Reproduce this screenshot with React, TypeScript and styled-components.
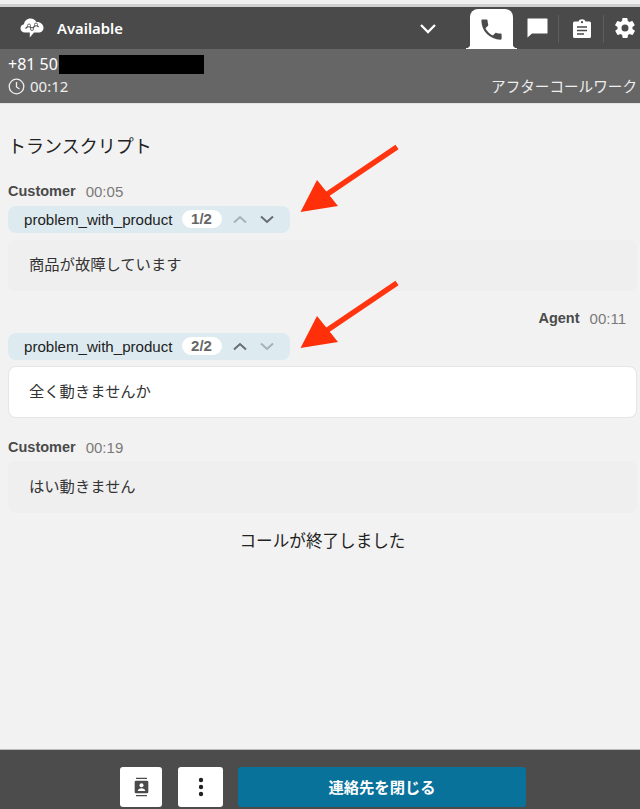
import React from "react";
import styled, { createGlobalStyle } from "styled-components";

const Global = createGlobalStyle`
  html, body { margin: 0; padding: 0; height: 100%; background: #f2f2f2; overflow: hidden; }
  #root { height: 100%; }
  * { box-sizing: border-box; }
`;

const Page = styled.div`
  position: relative;
  width: 640px;
  height: 809px;
  display: flex;
  flex-direction: column;
  background: #f2f2f2;
  font-family: "Liberation Sans", "Noto Sans CJK JP", sans-serif;
  overflow: hidden;
`;

const TopStrip = styled.div`
  height: 7px;
  flex: none;
  background: #f0f0f0;
  border-bottom: 3px solid #cfcfcf;
`;

const Header = styled.header`
  height: 42px;
  flex: none;
  display: flex;
  align-items: stretch;
  background: #4a4a4a;
  color: #fff;
`;

const Status = styled.div`
  display: flex;
  align-items: center;
  gap: 13px;
  padding-left: 20px;
  flex: 1;
  font-family: "Noto Sans", sans-serif;
  font-size: 14.8px;
  font-weight: 600;
`;

const Chevron = styled.div`
  width: 28px;
  margin-right: 28px;
  display: flex;
  align-items: center;
  justify-content: center;
`;

const Tabs = styled.nav`
  display: flex;
  align-items: stretch;
  width: 170px;
`;

const ActiveTab = styled.div`
  position: relative;
  width: 43px;
  margin: 2px 0 0 0;
  background: #fff;
  border-radius: 8px 8px 0 0;
  display: flex;
  align-items: center;
  justify-content: center;
  &::before, &::after {
    content: "";
    position: absolute;
    bottom: 0;
    width: 4px;
    height: 5px;
    background: radial-gradient(circle at var(--cx) 0, transparent 4px, #fff 4.5px);
  }
  &::before { left: -4px; --cx: 0; }
  &::after { right: -4px; --cx: 100%; }
`;

const Tab = styled.div<{ $w: number; $inset: number; $divider?: boolean }>`
  width: ${(p) => p.$w}px;
  padding-left: ${(p) => p.$inset}px;
  display: flex;
  align-items: center;
  justify-content: center;
  position: relative;
  ${(p) =>
    p.$divider
      ? `&::before { content: ""; position: absolute; left: 0; top: 8px; bottom: 6px; width: 1px; background: #5e5e5e; }`
      : ""}
`;

const CallBar = styled.section`
  height: 55px;
  flex: none;
  background: #666;
  color: #fff;
  display: flex;
  justify-content: space-between;
  align-items: flex-end;
  padding: 5px 3px 8px 8px;
  border-bottom: 1px solid #e3e3e3;
`;

const CallInfo = styled.div`
  display: flex;
  flex-direction: column;
  gap: 3px;
`;

const Phone = styled.div`
  display: flex;
  align-items: center;
  font-family: "Noto Sans", sans-serif;
  font-size: 16px;
  line-height: 19px;
  height: 19px;
  width: 196px;
`;

const Redaction = styled.span`
  display: block;
  width: 145px;
  height: 19px;
  margin-left: auto;
  background: #000;
`;

const Timer = styled.div`
  display: flex;
  align-items: center;
  gap: 5px;
  font-family: "Noto Sans", sans-serif;
  font-size: 15px;
  line-height: 18px;
  color: #eee;
`;

const WorkState = styled.div`
  font-family: "Noto Sans CJK JP", sans-serif;
  font-size: 14.6px;
  line-height: 18px;
  color: #eee;
`;

const Main = styled.main`
  flex: 1;
  padding: 28px 3px 0 8px;
  display: flex;
  flex-direction: column;
  color: #1e1e1e;
`;

const Title = styled.h1`
  margin: 0 0 24px 0;
  font-family: "Noto Sans CJK JP", sans-serif;
  font-size: 18px;
  font-weight: 400;
  line-height: 26px;
  color: #222;
`;

const Meta = styled.div<{ $right?: boolean }>`
  display: flex;
  gap: 10px;
  height: 18px;
  align-items: center;
  justify-content: ${(p) => (p.$right ? "flex-end" : "flex-start")};
  padding-right: ${(p) => (p.$right ? "11px" : "0")};
  font-size: 14.5px;
`;

const Speaker = styled.span`
  font-weight: 700;
  color: #4a4a4a;
`;

const Time = styled.span`
  color: #7a7a7a;
  font-size: 15px;
`;

const Intent = styled.div`
  margin-top: 6px;
  width: 282px;
  height: 27px;
  border-radius: 8px;
  background: #ddebf1;
  display: flex;
  align-items: center;
  padding-left: 16px;
  padding-bottom: 1px;
  font-size: 15.1px;
  color: #222;
`;

const Count = styled.span`
  margin-left: 9px;
  width: 40px;
  height: 18px;
  border-radius: 9px;
  background: #fff;
  color: #666;
  font-weight: 700;
  font-size: 15px;
  line-height: 18px;
  text-align: center;
`;

const Arrows = styled.div`
  margin-left: 11px;
  display: flex;
  gap: 13px;
`;

const Bubble = styled.div<{ $agent?: boolean; $gap: number; $h: number }>`
  margin-top: ${(p) => p.$gap}px;
  height: ${(p) => p.$h}px;
  border-radius: 8px;
  display: flex;
  align-items: center;
  padding: 0 0 5px 20px;
  font-family: "Noto Sans CJK JP", sans-serif;
  font-size: 15.3px;
  color: #333;
  background: ${(p) => (p.$agent ? "#fff" : "#efefef")};
  border: 1px solid ${(p) => (p.$agent ? "#e6e6e6" : "#efefef")};
`;

const Turn = styled.article<{ $top: number }>`
  margin-top: ${(p) => p.$top}px;
  display: flex;
  flex-direction: column;
`;

const Ended = styled.div`
  margin-top: 14px;
  text-align: center;
  font-family: "Noto Sans CJK JP", sans-serif;
  font-size: 16.6px;
  line-height: 26px;
  color: #222;
`;

const Footer = styled.footer`
  height: 60px;
  flex: none;
  background: #4c4c4c;
  border-top: 1px solid #bbb;
  display: flex;
  padding: 17px 0 0 120px;
`;

const IconButton = styled.button<{ $w: number; $mr: number }>`
  width: ${(p) => p.$w}px;
  height: 40px;
  margin-right: ${(p) => p.$mr}px;
  background: #fff;
  border: none;
  border-radius: 3px;
  padding: 0;
  display: flex;
  align-items: center;
  justify-content: center;
`;

const PrimaryButton = styled.button`
  width: 288px;
  height: 40px;
  background: #08729b;
  color: #fff;
  border: none;
  border-radius: 3px;
  padding: 0 0 3px;
  font-family: "Noto Sans CJK JP", sans-serif;
  font-size: 15.3px;
  font-weight: 700;
`;

const Annotation = styled.svg<{ $top: number }>`
  position: absolute;
  left: 295px;
  top: ${(p) => p.$top}px;
  width: 110px;
  height: 75px;
`;

const Caret = ({ up, color }: { up?: boolean; color: string }) => (
  <svg width="14" height="9" viewBox="0 0 14 9">
    <path d={up ? "M1 7.500 7 2l6 5.500" : "M1 1.500 7 7l6-5.500"} fill="none" stroke={color} strokeWidth="2" />
  </svg>
);

const Arrow = ({ top }: { top: number }) => (
  <Annotation $top={top} viewBox="0 0 110 75">
    <path d="M102 4 28 54" stroke="#ff3510" strokeWidth="5.500" fill="none" />
    <path d="M5.500 69 22 37 43 63Z" fill="#ff3009" />
  </Annotation>
);

const IntentBar = ({ count, upOn }: { count: string; upOn: boolean }) => (
  <Intent>
    problem_with_product
    <Count>{count}</Count>
    <Arrows>
      <Caret up color={upOn ? "#666c6f" : "#a8b2b6"} />
      <Caret color={upOn ? "#a8b2b6" : "#666c6f"} />
    </Arrows>
  </Intent>
);

export default function App() {
  return (
    <Page>
      <Global />
      <TopStrip />
      <Header>
        <Status>
          <svg width="24" height="22" viewBox="0 0 24 22">
            <path d="M5 15.500C2.300 15.500.5 13.700.5 11.300.5 9.100 2 7.500 4 7.200 4.500 3.800 7 1.500 10.500 1.500c2.700 0 4.800 1.300 5.900 3.500 3.800-.4 7.100 2.200 7.100 5.700 0 2.800-2 4.800-5 4.800H14L9.800 20.500v-5Z" fill="#fff" />
            <path d="M5.500 11.500 9 8.500l3 3.500 4-4.500 2.500 2.500" fill="none" stroke="#4a4a4a" strokeWidth="1.200" />
            <circle cx="9" cy="8.500" r="1.500" fill="#fff" stroke="#4a4a4a" strokeWidth=".8" />
            <circle cx="12" cy="12" r="1.500" fill="#fff" stroke="#4a4a4a" strokeWidth=".8" />
            <circle cx="16" cy="7.500" r="1.500" fill="#fff" stroke="#4a4a4a" strokeWidth=".8" />
          </svg>
          Available
        </Status>
        <Chevron>
          <svg width="18" height="11" viewBox="0 0 18 11">
            <path d="M2 2l7 7 7-7" fill="none" stroke="#fff" strokeWidth="2.300" />
          </svg>
        </Chevron>
        <Tabs>
          <ActiveTab>
            <svg width="27" height="27" viewBox="0 0 24 24">
              <path d="M6.600 10.800c1.400 2.800 3.800 5.100 6.600 6.600l2.200-2.200c.3-.3.700-.4 1-.2 1.100.4 2.300.6 3.600.6.600 0 1 .4 1 1V20c0 .6-.4 1-1 1C10.600 21 3 13.400 3 4c0-.6.400-1 1-1h3.500c.6 0 1 .4 1 1 0 1.300.2 2.500.6 3.600.1.300 0 .7-.2 1l-2.300 2.200Z" fill="#4a4a4a" />
            </svg>
          </ActiveTab>
          <Tab $w={45} $inset={3}>
            <svg width="21" height="20" viewBox="0 0 21 20">
              <path d="M1 .5h19a.5.5 0 0 1 .5.5v14a.5.5 0 0 1-.5.500H5L.5 19.500V1A.5.5 0 0 1 1 .5Z" fill="#fff" />
            </svg>
          </Tab>
          <Tab $w={45} $inset={3} $divider>
            <svg width="18" height="19" viewBox="0 0 18 19">
              <path d="M1.500 2.500h4C6 1 7.300.3 9 .3s3 .7 3.500 2.200h4A1.500 1.500 0 0 1 18 4v13.500a1.500 1.500 0 0 1-1.500 1.500h-15A1.500 1.500 0 0 1 0 17.500V4a1.500 1.500 0 0 1 1.500-1.500Z" fill="#fff" />
              <path d="M4 8h10M4 11.500h10M4 15h7" stroke="#4a4a4a" strokeWidth="1.500" />
              <circle cx="9" cy="3.200" r="1.100" fill="#4a4a4a" />
            </svg>
          </Tab>
          <Tab $w={37} $inset={7} $divider>
            <svg width="24" height="24" viewBox="0 0 24 24">
              <path fillRule="evenodd" d="M19.400 13c.1-.3.100-.7.100-1s0-.7-.1-1l2.100-1.600c.2-.2.200-.4.100-.6l-2-3.500c-.1-.2-.4-.3-.6-.2l-2.500 1c-.5-.4-1.100-.7-1.700-1l-.4-2.600c0-.3-.2-.5-.5-.5h-4c-.3 0-.5.200-.5.400l-.4 2.700c-.6.200-1.200.6-1.700 1l-2.500-1c-.2-.1-.5 0-.6.200l-2 3.500c-.1.200-.1.500.1.600L4.600 11c-.1.300-.1.700-.1 1s0 .7.100 1l-2.100 1.600c-.2.200-.2.400-.1.600l2 3.500c.1.200.4.300.6.200l2.500-1c.5.400 1.100.7 1.700 1l.4 2.600c0 .3.200.5.500.5h4c.3 0 .5-.2.500-.4l.4-2.700c.6-.2 1.200-.6 1.700-1l2.500 1c.2.100.5 0 .6-.2l2-3.500c.1-.2.100-.5-.1-.6L19.400 13ZM12 15.500a3.500 3.500 0 1 1 0-7 3.500 3.500 0 0 1 0 7Z" fill="#fff" />
            </svg>
          </Tab>
        </Tabs>
      </Header>
      <CallBar>
        <CallInfo>
          <Phone>
            +81 50
            <Redaction />
          </Phone>
          <Timer>
            <svg width="17" height="17" viewBox="0 0 17 17">
              <circle cx="8.500" cy="8.500" r="7.300" fill="none" stroke="#eee" strokeWidth="1.300" />
              <path d="M8.500 4v5l3 2" fill="none" stroke="#eee" strokeWidth="1.300" />
            </svg>
            00:12
          </Timer>
        </CallInfo>
        <WorkState>アフターコールワーク</WorkState>
      </CallBar>
      <Main>
        <Title>トランスクリプト</Title>
        <Turn $top={0}>
          <Meta>
            <Speaker>Customer</Speaker>
            <Time>00:05</Time>
          </Meta>
          <IntentBar count="1/2" upOn={false} />
          <Bubble $gap={7} $h={51}>商品が故障しています</Bubble>
        </Turn>
        <Turn $top={18}>
          <Meta $right>
            <Speaker>Agent</Speaker>
            <Time>00:11</Time>
          </Meta>
          <IntentBar count="2/2" upOn />
          <Bubble $agent $gap={6} $h={52}>全く動きませんか</Bubble>
        </Turn>
        <Turn $top={20}>
          <Meta>
            <Speaker>Customer</Speaker>
            <Time>00:19</Time>
          </Meta>
          <Bubble $gap={5} $h={52}>はい動きません</Bubble>
        </Turn>
        <Ended>コールが終了しました</Ended>
      </Main>
      <Footer>
        <IconButton $w={42} $mr={16}>
          <svg width="15" height="20" viewBox="0 0 16 22">
            <path d="M2 1.500h12M2 20.500h12" stroke="#4a4a4a" strokeWidth="1.500" />
            <rect x="0.500" y="4" width="15" height="14" rx="1.500" fill="#4a4a4a" />
            <circle cx="8" cy="9" r="2.200" fill="#fff" />
            <path d="M3.800 15.500c.4-2 2-3 4.200-3s3.800 1 4.200 3Z" fill="#fff" />
          </svg>
        </IconButton>
        <IconButton $w={45} $mr={15}>
          <svg width="6" height="20" viewBox="0 0 6 20">
            <circle cx="3" cy="3" r="2.200" fill="#222" />
            <circle cx="3" cy="10" r="2.200" fill="#222" />
            <circle cx="3" cy="17" r="2.200" fill="#222" />
          </svg>
        </IconButton>
        <PrimaryButton>連絡先を閉じる</PrimaryButton>
      </Footer>
      <Arrow top={143} />
      <Arrow top={279} />
    </Page>
  );
}
